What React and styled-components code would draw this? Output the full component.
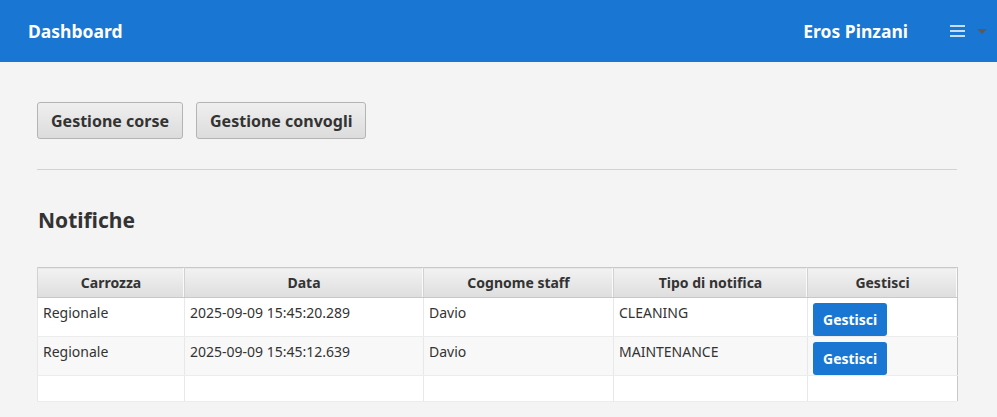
import React from 'react';
import styled, { createGlobalStyle } from 'styled-components';

const GlobalStyle = createGlobalStyle`
  html, body {
    margin: 0;
    padding: 0;
    background: #f4f4f4;
    font-family: "Noto Sans", "Open Sans", sans-serif;
  }
`;

const TopBar = styled.header`
  height: 62px;
  background-color: #1976d2;
  display: flex;
  align-items: center;
  padding: 0 10px 0 28px;
  color: #ffffff;
  font-weight: 700;
  font-size: 17.5px;
`;

const Title = styled.div`
  flex: 1;
`;

const UserName = styled.div`
  margin-right: 42px;
`;

const MenuIcon = styled.div`
  display: flex;
  align-items: center;
  gap: 12px;
`;

const Arrow = styled.span`
  width: 0;
  height: 0;
  border-left: 5px solid transparent;
  border-right: 5px solid transparent;
  border-top: 5px solid #5a5a5a;
  margin-top: 1px;
`;

const Main = styled.main`
  padding: 40px 40px 0 37px;
`;

const ButtonRow = styled.div`
  display: flex;
  gap: 13px;
`;

const NavButton = styled.button`
  height: 37px;
  padding: 0 13px;
  font-family: inherit;
  font-size: 16px;
  font-weight: 700;
  color: #333333;
  background: linear-gradient(#efefef, #dcdcdc);
  border: 1px solid #b4b4b4;
  border-radius: 3px;
`;

const Divider = styled.hr`
  margin: 30px 0 0;
  border: 0;
  border-top: 1px solid #d2d2d2;
`;

const SectionTitle = styled.h2`
  margin: 36px 0 0 1px;
  font-size: 21px;
  font-weight: 700;
  color: #333333;
  line-height: 28px;
`;

const Table = styled.table`
  margin-top: 33px;
  width: 920px;
  border-collapse: collapse;
  border: 1px solid #c8c8c8;
  background: #ffffff;
  font-size: 14px;
  color: #333333;
  table-layout: fixed;
`;

const Th = styled.th`
  height: 29px;
  padding: 0;
  font-weight: 700;
  text-align: center;
  background: linear-gradient(#f2f2f2, #dedede);
  border-left: 1px solid #d2d2d2;
  border-bottom: 1px solid #c8c8c8;
  box-shadow: inset -1px 0 0 #fafafa;
`;

const Tr = styled.tr`
  background: ${p => (p.$odd ? '#f8f8f8' : '#ffffff')};
`;

const Td = styled.td`
  height: ${p => p.$h || 39}px;
  padding: 4px 5px 0;
  vertical-align: top;
  border-left: 1px solid #e8e8e8;
  border-bottom: 1px solid #ececec;
  box-sizing: border-box;
  line-height: 22px;
`;

const ActionButton = styled.button`
  height: 33px;
  padding: 0 10px;
  font-family: inherit;
  font-size: 14px;
  font-weight: 700;
  color: #ffffff;
  background: #1976d2;
  border: 0;
  border-radius: 3px;
  margin-top: 1px;
`;

const columns = [
  ['Carrozza', 147],
  ['Data', 239],
  ['Cognome staff', 190],
  ['Tipo di notifica', 194],
  ['Gestisci', 150],
];

const rows = [
  ['Regionale', '2025-09-09 15:45:20.289', 'Davio', 'CLEANING'],
  ['Regionale', '2025-09-09 15:45:12.639', 'Davio', 'MAINTENANCE'],
];

export default function App() {
  return (
    <>
      <GlobalStyle />
      <TopBar>
        <Title>Dashboard</Title>
        <UserName>Eros Pinzani</UserName>
        <MenuIcon>
          <svg width="15" height="14" viewBox="0 0 15 14">
            <path d="M0 2h15M0 7h15M0 12h15" stroke="#fff" strokeWidth="1.6" />
          </svg>
          <Arrow />
        </MenuIcon>
      </TopBar>
      <Main>
        <ButtonRow>
          <NavButton>Gestione corse</NavButton>
          <NavButton>Gestione convogli</NavButton>
        </ButtonRow>
        <Divider />
        <SectionTitle>Notifiche</SectionTitle>
        <Table>
          <colgroup>
            {columns.map(([name, w]) => (
              <col key={name} style={{ width: w }} />
            ))}
          </colgroup>
          <thead>
            <tr>
              {columns.map(([name]) => (
                <Th key={name}>{name}</Th>
              ))}
            </tr>
          </thead>
          <tbody>
            {rows.map((r, i) => (
              <Tr key={i} $odd={i % 2 === 1}>
                {r.map((c, j) => (
                  <Td key={j}>{c}</Td>
                ))}
                <Td>
                  <ActionButton>Gestisci</ActionButton>
                </Td>
              </Tr>
            ))}
            <Tr>
              {columns.map(([name]) => (
                <Td key={name} $h={26} />
              ))}
            </Tr>
          </tbody>
        </Table>
      </Main>
    </>
  );
}
